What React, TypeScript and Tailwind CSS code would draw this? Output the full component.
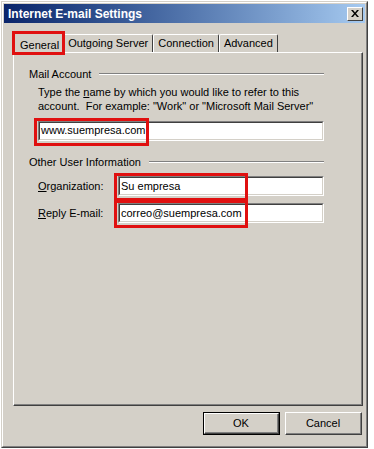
import React from 'react';

const FONT = { fontFamily: '"Liberation Sans", Arial, sans-serif' };

function Field({ value, boxW }: { value: string; boxW: number }) {
  return (
    <div className="relative flex-1 h-[20px] border-t border-l border-t-[#808080] border-l-[#808080] border-b border-r border-b-white border-r-white">
      <div className="h-full border-t border-l border-t-[#404040] border-l-[#404040] border-b border-r border-b-[#d4d0c8] border-r-[#d4d0c8] bg-white flex items-center pl-[1px] text-[11px] text-black">
        {value}
      </div>
      <div
        className="absolute -left-[5px] -top-[4px] h-[28px] border-[3px] border-[#e01010]"
        style={{ width: boxW }}
      />
    </div>
  );
}

function Tab({ label, active }: { label: string; active?: boolean }) {
  if (active) {
    return (
      <div className="relative z-10 -mb-[2px] -mr-[2px] h-[22px] px-[5px] pt-[2px] bg-[#d4d0c8] border-t border-l border-t-white border-l-white border-r border-r-[#404040] rounded-t-[2px] text-[11px] flex items-start">
        <span className="mt-[2px]">{label}</span>
        <div className="absolute -left-[3px] -top-[2px] w-[53px] h-[24px] border-[3px] border-[#e01010]" />
      </div>
    );
  }
  return (
    <div className="h-[18px] px-[4px] bg-[#d4d0c8] border-t border-l border-t-white border-l-white border-r border-r-[#404040] rounded-t-[2px] text-[11px] flex items-center mt-[2px]">
      <span>{label}</span>
    </div>
  );
}

function Btn({ label, def }: { label: string; def?: boolean }) {
  return (
    <div className={`w-[77px] h-[23px] ${def ? 'border border-black' : ''}`}>
      <div className="h-full border-t border-l border-t-white border-l-white border-b border-r border-b-[#404040] border-r-[#404040]">
        <div className="h-full flex items-center justify-center border-b border-r border-b-[#808080] border-r-[#808080] text-[11px]">
          {label}
        </div>
      </div>
    </div>
  );
}

export default function App() {
  return (
    <div className="w-[374px] h-[449px] bg-white pl-[1px] pt-[1px]" style={FONT}>
      <div className="w-[367px] h-[447px] border-t border-l border-t-[#d4d0c8] border-l-[#d4d0c8] border-b border-r border-b-[#404040] border-r-[#404040]">
        <div className="h-full border-t border-l border-t-white border-l-white border-b border-r border-b-[#808080] border-r-[#808080] bg-[#d4d0c8] p-[1px] flex flex-col text-black">
          <div className="h-[19px] bg-gradient-to-r from-[#0a246a] to-[#a6caf0] flex items-center justify-between pl-[4px] pr-[2px]">
            <span className="text-white font-bold text-[12px]">Internet E-mail Settings</span>
            <div className="w-[16px] h-[14px] bg-[#d4d0c8] border-t border-l border-t-white border-l-white border-b border-r border-b-[#404040] border-r-[#404040] flex items-center justify-center">
              <svg width="8" height="7" viewBox="0 0 8 7">
                <path d="M0 0h2l2 2.5L6 0h2L5 3.5 8 7H6L4 4.5 2 7H0l3-3.5z" fill="#000" />
              </svg>
            </div>
          </div>

          <div className="flex items-end pl-[10px] mt-[9px]">
            <Tab label="General" active />
            <Tab label="Outgoing Server" />
            <Tab label="Connection" />
            <Tab label="Advanced" />
          </div>

          <div className="ml-[9px] w-[350px] h-[354px] border-t border-l border-t-white border-l-white border-b border-r border-b-[#404040] border-r-[#404040]">
            <div className="h-full border-b border-r border-b-[#808080] border-r-[#808080] pl-[15px] pr-[37px] pt-[13px] text-[11px]">
              <div className="flex items-center gap-[8px]">
                <span>Mail Account</span>
                <div className="flex-1 h-[2px] border-t border-t-[#808080] border-b border-b-white" />
              </div>
              <div className="pl-[9px] mt-[2px] leading-[14px]">
                <div>
                  Type the <span className="underline">n</span>ame by which you would like to refer to this
                </div>
                <div>account.&nbsp; For example: "Work" or "Microsoft Mail Server"</div>
              </div>
              <div className="pl-[9px] mt-[8px] flex">
                <Field value="www.suempresa.com" boxW={115} />
              </div>

              <div className="flex items-center gap-[8px] mt-[13px]">
                <span>Other User Information</span>
                <div className="flex-1 h-[2px] border-t border-t-[#808080] border-b border-b-white" />
              </div>
              <div className="pl-[9px] mt-[6px] flex items-center">
                <span className="w-[80px]">
                  <span className="underline">O</span>rganization:
                </span>
                <Field value="Su empresa" boxW={134} />
              </div>
              <div className="pl-[9px] mt-[7px] flex items-center">
                <span className="w-[80px]">
                  <span className="underline">R</span>eply E-mail:
                </span>
                <Field value="correo@suempresa.com" boxW={134} />
              </div>
            </div>
          </div>

          <div className="flex justify-end gap-[5px] pr-[3px] mt-[6px] text-[11px]">
            <Btn label="OK" def />
            <Btn label="Cancel" />
          </div>
        </div>
      </div>
    </div>
  );
}
